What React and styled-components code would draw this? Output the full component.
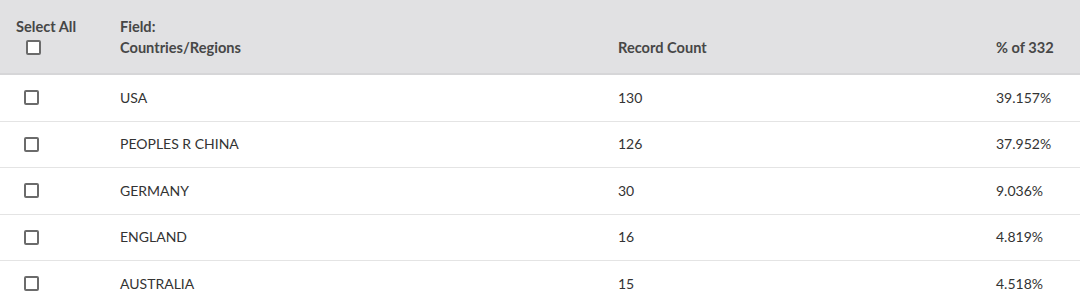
import React from "react";
import styled, { createGlobalStyle } from "styled-components";

const Global = createGlobalStyle`
  html, body { margin: 0; padding: 0; background: #fff; }
  body { font-family: "Source Sans Pro", Lato, "Noto Sans", sans-serif; }
`;

const Table = styled.div`
  width: 1080px;
  font-size: 14px;
  color: #333;
`;

const Cols = "120px 498px 378px 1fr";

const HeaderRow = styled.div`
  display: grid;
  grid-template-columns: ${Cols};
  align-items: end;
  height: 75px;
  box-sizing: border-box;
  padding-bottom: 15px;
  background: #e1e1e3;
  border-bottom: 2px solid #d6d6d8;
  font-weight: 700;
  font-size: 14.6px;
  color: #474747;
`;

const HeadCell = styled.div`
  padding-left: ${(p) => p.$pl || 0}px;
  line-height: 21px;
  display: flex;
  flex-direction: column;
  align-items: flex-start;
`;

const Row = styled.div`
  display: grid;
  grid-template-columns: ${Cols};
  align-items: center;
  height: 46.5px;
  box-sizing: border-box;
  border-bottom: 1px solid #e4e4e4;
`;

const Cell = styled.div`
  padding-left: ${(p) => p.$pl || 0}px;
  line-height: 20px;
  display: flex;
  align-items: center;
`;

const Box = styled.span`
  display: inline-block;
  width: 15px;
  height: 15px;
  box-sizing: border-box;
  border: 2px solid #6b6b6b;
  border-radius: 2px;
  background: #fff;
  margin-left: ${(p) => p.$ml || 0}px;
  margin-top: ${(p) => p.$mt || 0}px;
  margin-bottom: ${(p) => p.$mb || 0}px;
`;

const data = [
  ["USA", 130, "39.157%"],
  ["PEOPLES R CHINA", 126, "37.952%"],
  ["GERMANY", 30, "9.036%"],
  ["ENGLAND", 16, "4.819%"],
  ["AUSTRALIA", 15, "4.518%"],
];

export default function App() {
  return (
    <>
      <Global />
      <Table>
        <HeaderRow>
          <HeadCell $pl={16}>
            <span>Select All</span>
            <Box $ml={10} $mt={3} $mb={3} />
          </HeadCell>
          <HeadCell>
            <span>Field:</span>
            <span>Countries/Regions</span>
          </HeadCell>
          <HeadCell>Record Count</HeadCell>
          <HeadCell>% of 332</HeadCell>
        </HeaderRow>
        {data.map(([name, count, pct]) => (
          <Row key={name}>
            <Cell $pl={24}>
              <Box />
            </Cell>
            <Cell>{name}</Cell>
            <Cell>{count}</Cell>
            <Cell>{pct}</Cell>
          </Row>
        ))}
      </Table>
    </>
  );
}
